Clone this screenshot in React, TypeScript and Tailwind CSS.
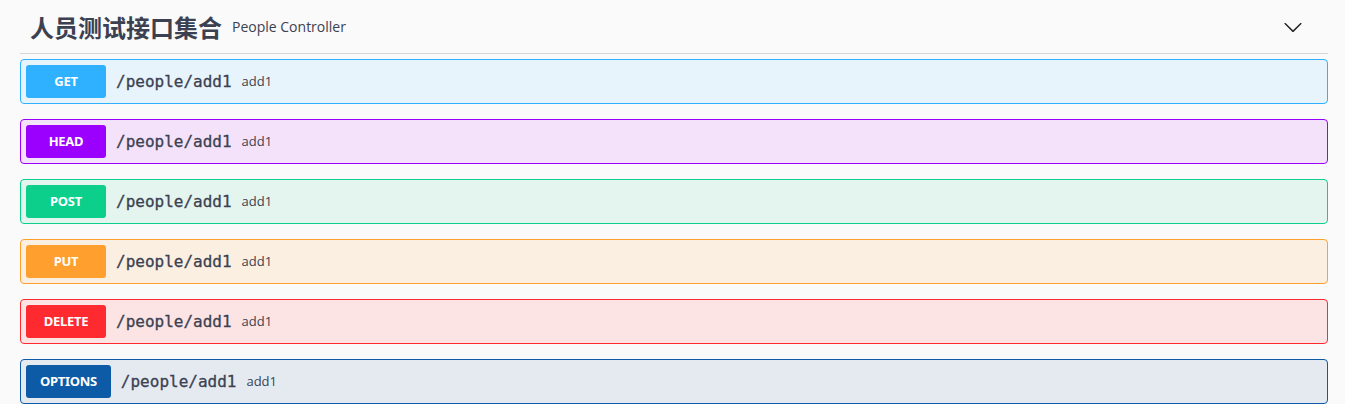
const OPS = [
  { method: 'GET', badge: 'bg-[#2fb1ff]', box: 'bg-[#e8f4fb] border-[#2fb1ff]' },
  { method: 'HEAD', badge: 'bg-[#9b00ff]', box: 'bg-[#f4e2fa] border-[#9b00ff]' },
  { method: 'POST', badge: 'bg-[#0ccf8b]', box: 'bg-[#e3f5ee] border-[#0ccf8b]' },
  { method: 'PUT', badge: 'bg-[#ff9f2e]', box: 'bg-[#faefe1] border-[#ff9f2e]' },
  { method: 'DELETE', badge: 'bg-[#ff2a30]', box: 'bg-[#fbe4e3] border-[#ff2a30]' },
  { method: 'OPTIONS', badge: 'bg-[#0d5aa7]', box: 'bg-[#e5eaf1] border-[#0d5aa7]' },
]

export default function App() {
  return (
    <div className="min-h-screen bg-[#fafafa] pl-5 text-[#3b4151] font-['Open_Sans','Noto_Sans','Noto_Sans_CJK_SC',sans-serif]">
      <div className="w-[1308px]">
        {/* Tag header */}
        <div className="flex h-[54px] items-center border-b border-[#d6d5d2] pl-[10px] pr-[25px]">
          <span className="text-[24px] font-bold font-['Noto_Sans_CJK_SC',sans-serif] leading-none">人员测试接口集合</span>
          <span className="ml-[10px] text-[14px]">People Controller</span>
          <svg className="ml-auto h-5 w-5" viewBox="0 0 20 20" fill="#222">
            <path d="M17.418 6.109c.272-.268.709-.268.979 0s.271.701 0 .969l-7.908 7.83c-.27.268-.707.268-.979 0l-7.908-7.83c-.27-.268-.27-.701 0-.969.271-.268.709-.268.979 0L10 13.25l7.418-7.141z" />
          </svg>
        </div>

        {/* Operations */}
        <div className="mt-[5px]">
          {OPS.map(op => (
            <div key={op.method} className={`mb-[15px] flex items-center rounded-[4px] border p-[5px] ${op.box}`}>
              <span className={`flex h-[33px] min-w-[80px] items-center justify-center rounded-[3px] px-[14px] text-[13px] font-bold tracking-[-0.3px] text-white font-['Noto_Sans',sans-serif] ${op.badge}`}>
                {op.method}
              </span>
              <span className="px-[10px] pt-[1px] text-[16px] font-['DejaVu_Sans_Mono',monospace] [-webkit-text-stroke:0.3px_#3b4151]">/people/add1</span>
              <span className="pt-[1px] text-[13px]">add1</span>
            </div>
          ))}
        </div>
      </div>
    </div>
  )
}
